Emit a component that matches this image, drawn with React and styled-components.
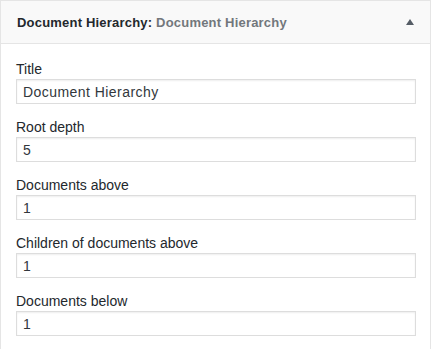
import React from "react";
import styled, { createGlobalStyle } from "styled-components";

const GlobalStyle = createGlobalStyle`
  html, body {
    margin: 0;
    padding: 0;
    background: #ffffff;
  }
  body {
    font-family: "Liberation Sans", Arial, Helvetica, sans-serif;
    color: #23282d;
  }
`;

const fields = [
  { label: "Title", value: "Document Hierarchy" },
  { label: "Root depth", value: "5" },
  { label: "Documents above", value: "1" },
  { label: "Children of documents above", value: "1" },
  { label: "Documents below", value: "1" },
];

export default function App() {
  return (
    <>
      <GlobalStyle />
      <Widget>
        <WidgetTop>
          <WidgetTitle>
            Document Hierarchy:<InTitle> Document Hierarchy</InTitle>
          </WidgetTitle>
          <Arrow />
        </WidgetTop>
        <WidgetInside>
          {fields.map((f) => (
            <Field key={f.label}>
              <Label>{f.label}</Label>
              <Input type="text" defaultValue={f.value} />
            </Field>
          ))}
        </WidgetInside>
      </Widget>
    </>
  );
}

const Widget = styled.div`
  width: 431px;
  height: 360px;
  box-sizing: border-box;
  border: 1px solid #e5e5e5;
  background: #ffffff;
`;

const WidgetTop = styled.div`
  height: 42px;
  display: flex;
  align-items: center;
  justify-content: space-between;
  padding: 0 16px 0 16px;
  background: #f9f9f9;
  border-bottom: 1px solid #e5e5e5;
`;

const WidgetTitle = styled.h3`
  margin: 0;
  font-size: 13px;
  font-weight: 700;
  letter-spacing: 0.2px;
  color: #23282d;
  line-height: 1;
`;

const InTitle = styled.span`
  color: #72777c;
`;

const Arrow = styled.span`
  width: 0;
  height: 0;
  border-left: 4px solid transparent;
  border-right: 4px solid transparent;
  border-bottom: 6px solid #555d66;
`;

const WidgetInside = styled.div`
  padding: 16px 15px 0 15px;
  display: flex;
  flex-direction: column;
  gap: 14px;
`;

const Field = styled.div`
  display: flex;
  flex-direction: column;
`;

const Label = styled.label`
  font-size: 14px;
  line-height: 19px;
  color: #23282d;
`;

const Input = styled.input`
  box-sizing: border-box;
  width: 400px;
  height: 25px;
  margin: 0;
  padding: 0 6px;
  border: 1px solid #dddddd;
  border-radius: 0;
  box-shadow: inset 0 1px 2px rgba(0, 0, 0, 0.07);
  background: #ffffff;
  font-family: "Liberation Sans", Arial, Helvetica, sans-serif;
  font-size: 14px;
  letter-spacing: 0.45px;
  color: #32373c;
  outline: none;
`;
